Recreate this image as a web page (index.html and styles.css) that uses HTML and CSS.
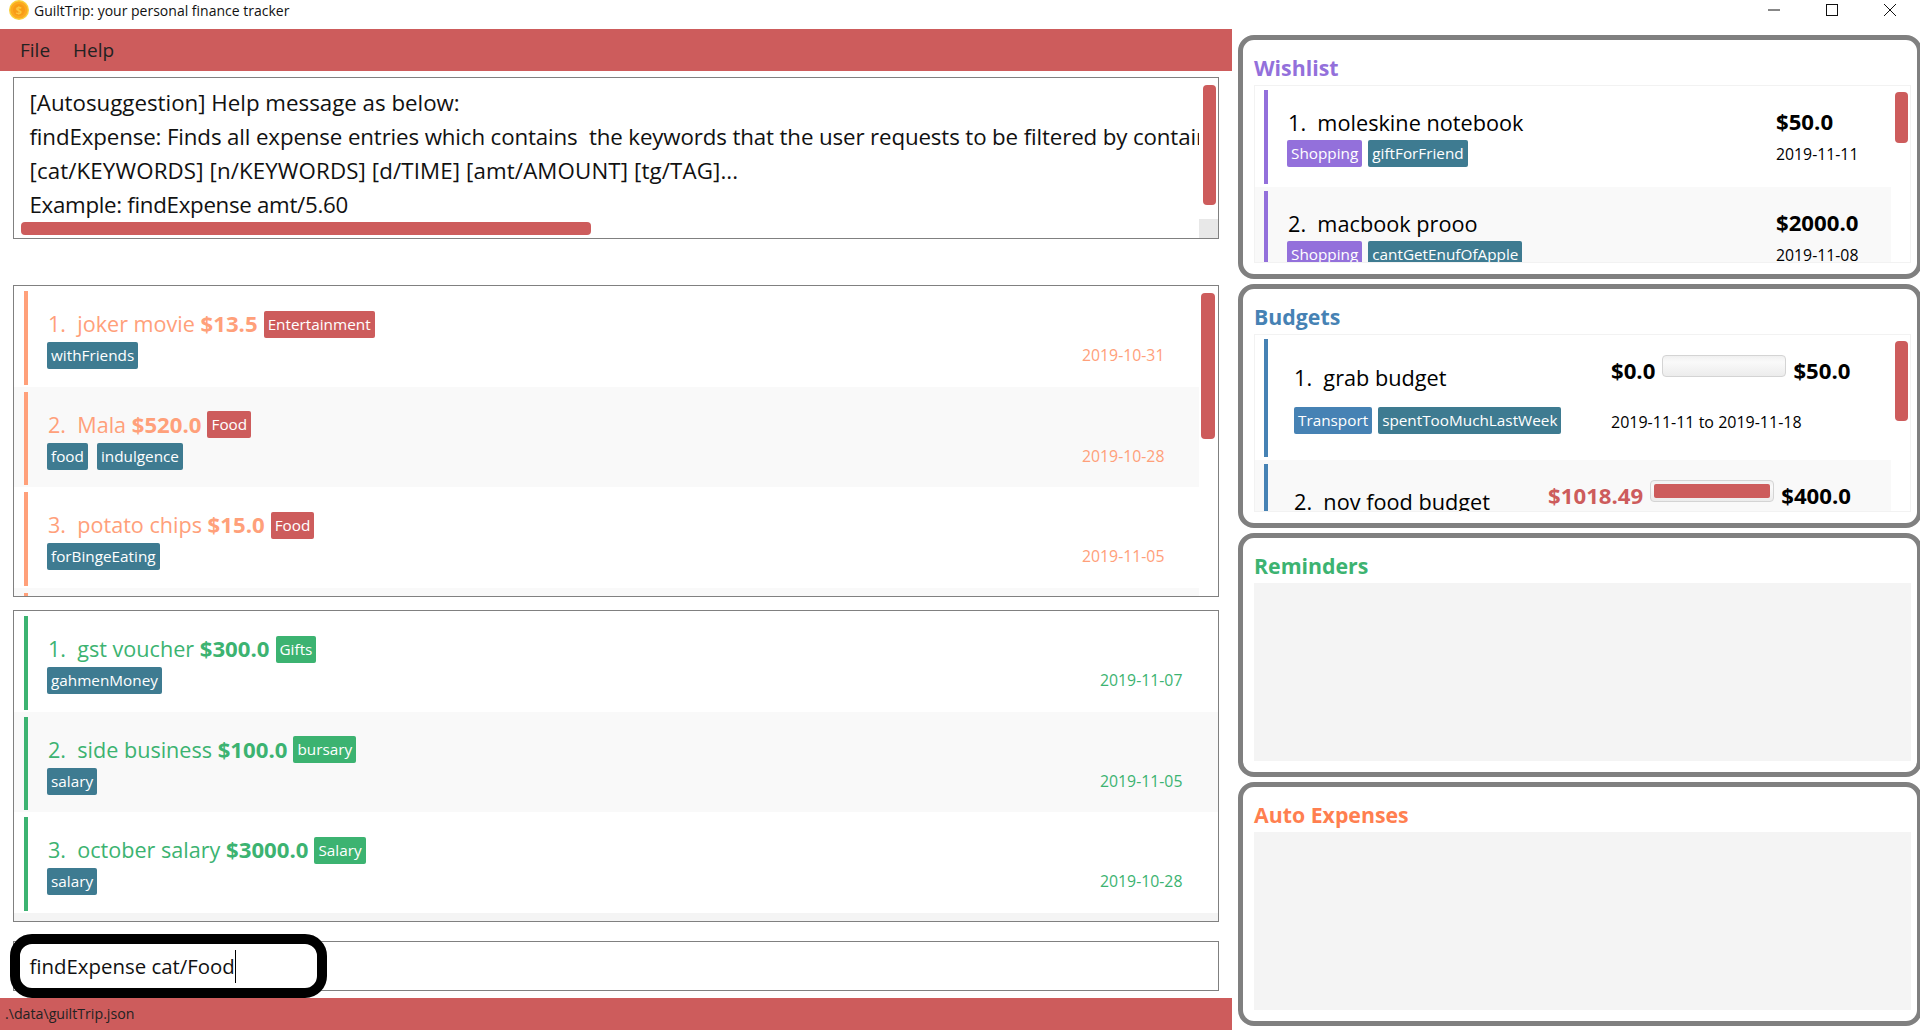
FILE: index.html
```html
<!DOCTYPE html>
<html lang="en">
<head>
  <meta charset="UTF-8" />
  <title>GuiltTrip: your personal finance tracker</title>
  <link rel="stylesheet" href="styles.css">
</head>
<body>

  <header class="titlebar">
    <svg class="coin" width="20" height="20" viewBox="0 0 20 20">
      <circle cx="10" cy="10" r="10" fill="#f9cf3a" />
      <circle cx="10" cy="10" r="8.6" fill="#fca81f" />
      <circle cx="10" cy="10" r="6" fill="#f89c16" />
      <text x="10" y="14" text-anchor="middle" class="coin-sign">$</text>
    </svg>
    <span class="app-title">GuiltTrip: your personal finance tracker</span>
    <div class="win-controls">
      <svg width="12" height="12" viewBox="0 0 12 12"><path d="M0 6H12" stroke="#111" fill="none" /></svg>
      <svg width="12" height="12" viewBox="0 0 12 12"><rect x=".5" y=".5" width="11" height="11" stroke="#111" fill="none" /></svg>
      <svg width="12" height="12" viewBox="0 0 12 12"><path d="M0 0L12 12M12 0L0 12" stroke="#111" fill="none" /></svg>
    </div>
  </header>

  <main class="app">
    <section class="left">
      <nav class="menubar">
        <span>File</span>
        <span>Help</span>
      </nav>

      <div class="box help-box">
        <div class="help-text">
          <p>[Autosuggestion] Help message as below:</p>
          <p>findExpense: Finds all expense entries which contains  the keywords that the user requests to be filtered by containing any of the following</p>
          <p>[cat/KEYWORDS] [n/KEYWORDS] [d/TIME] [amt/AMOUNT] [tg/TAG]...</p>
          <p>Example: findExpense amt/5.60</p>
        </div>
        <div class="thumb thumb-help-v"></div>
        <div class="thumb thumb-help-h"></div>
        <div class="corner"></div>
      </div>

      <div class="box list-box expenses">
        <div class="entry">
          <div class="entry-main">
            <div class="entry-title"><span>1.&nbsp; joker movie&nbsp;</span><b>$13.5</b><span class="tag cat-red">Entertainment</span></div>
            <div class="tags"><span class="tag">withFriends</span></div>
          </div>
          <div class="entry-date">2019-10-31</div>
        </div>
        <div class="entry">
          <div class="entry-main">
            <div class="entry-title"><span>2.&nbsp; Mala&nbsp;</span><b>$520.0</b><span class="tag cat-red">Food</span></div>
            <div class="tags"><span class="tag">food</span><span class="tag">indulgence</span></div>
          </div>
          <div class="entry-date">2019-10-28</div>
        </div>
        <div class="entry">
          <div class="entry-main">
            <div class="entry-title"><span>3.&nbsp; potato chips&nbsp;</span><b>$15.0</b><span class="tag cat-red">Food</span></div>
            <div class="tags"><span class="tag">forBingeEating</span></div>
          </div>
          <div class="entry-date">2019-11-05</div>
        </div>
        <div class="entry">
          <div class="entry-main"></div>
        </div>
        <div class="thumb thumb-expenses"></div>
      </div>

      <div class="box list-box incomes">
        <div class="entry">
          <div class="entry-main">
            <div class="entry-title"><span>1.&nbsp; gst voucher&nbsp;</span><b>$300.0</b><span class="tag cat-green">Gifts</span></div>
            <div class="tags"><span class="tag">gahmenMoney</span></div>
          </div>
          <div class="entry-date">2019-11-07</div>
        </div>
        <div class="entry">
          <div class="entry-main">
            <div class="entry-title"><span>2.&nbsp; side business&nbsp;</span><b>$100.0</b><span class="tag cat-green">bursary</span></div>
            <div class="tags"><span class="tag">salary</span></div>
          </div>
          <div class="entry-date">2019-11-05</div>
        </div>
        <div class="entry">
          <div class="entry-main">
            <div class="entry-title"><span>3.&nbsp; october salary&nbsp;</span><b>$3000.0</b><span class="tag cat-green">Salary</span></div>
            <div class="tags"><span class="tag">salary</span></div>
          </div>
          <div class="entry-date">2019-10-28</div>
        </div>
      </div>

      <div class="box command-box">
        <span class="command-text">findExpense cat/Food</span>
        <div class="highlight-ring"></div>
      </div>

      <footer class="statusbar">.\data\guiltTrip.json</footer>
    </section>

    <aside class="right">
      <section class="panel">
        <h3 class="panel-title wish">Wishlist</h3>
        <div class="panel-list">
          <div class="wish-row">
            <div class="wish-left">
              <div class="row-name">1.&nbsp; moleskine notebook</div>
              <div class="tags"><span class="tag cat-purple">Shopping</span><span class="tag">giftForFriend</span></div>
            </div>
            <div class="wish-right">
              <div class="row-price">$50.0</div>
              <div class="row-date">2019-11-11</div>
            </div>
          </div>
          <div class="wish-row">
            <div class="wish-left">
              <div class="row-name">2.&nbsp; macbook prooo</div>
              <div class="tags"><span class="tag cat-purple">Shopping</span><span class="tag">cantGetEnufOfApple</span></div>
            </div>
            <div class="wish-right">
              <div class="row-price">$2000.0</div>
              <div class="row-date">2019-11-08</div>
            </div>
          </div>
          <div class="thumb thumb-wish"></div>
        </div>
      </section>

      <section class="panel">
        <h3 class="panel-title budget">Budgets</h3>
        <div class="panel-list">
          <div class="budget-row">
            <div class="budget-left">
              <div class="row-name">1.&nbsp; grab budget</div>
              <div class="tags"><span class="tag cat-blue">Transport</span><span class="tag">spentTooMuchLastWeek</span></div>
            </div>
            <div class="budget-right">
              <div class="budget-line">
                <span class="row-price">$0.0</span>
                <span class="progress"></span>
                <span class="row-price">$50.0</span>
              </div>
              <div class="row-date">2019-11-11 to 2019-11-18</div>
            </div>
          </div>
          <div class="budget-row">
            <div class="budget-left">
              <div class="row-name">2.&nbsp; nov food budget</div>
            </div>
            <div class="budget-right">
              <div class="budget-line">
                <span class="row-price over">$1018.49</span>
                <span class="progress"><span class="progress-fill"></span></span>
                <span class="row-price">$400.0</span>
              </div>
            </div>
          </div>
          <div class="thumb thumb-budget"></div>
        </div>
      </section>

      <section class="panel">
        <h3 class="panel-title reminder">Reminders</h3>
        <div class="panel-list empty"></div>
      </section>

      <section class="panel">
        <h3 class="panel-title auto">Auto Expenses</h3>
        <div class="panel-list empty"></div>
      </section>
    </aside>
  </main>

</body>
</html>
```

FILE: styles.css
```css
* {
  margin: 0;
  padding: 0;
  box-sizing: border-box;
}
html, body {
  height: 100%;
  overflow: hidden;
}
body {
  width: 1920px;
  height: 1030px;
  background-color: #fff;
  color: #111;
  font-family: "Open Sans", "Noto Sans", sans-serif;
  display: flex;
  flex-direction: column;
}

/* title bar */
.titlebar {
  height: 29px;
  flex: none;
  display: flex;
  align-items: flex-start;
  padding-left: 9px;
}
.coin {
  flex: none;
}
.coin-sign {
  font-size: 11px;
  font-weight: bold;
  fill: #fdc63f;
}
.app-title {
  font-size: 14px;
  line-height: 22px;
  margin-left: 5px;
  color: #111;
}
.win-controls {
  margin-left: auto;
  display: flex;
  gap: 46px;
  padding: 4px 24px 0 0;
}

.app {
  flex: 1;
  display: flex;
  min-height: 0;
}
.left {
  width: 1232px;
  flex: none;
  display: flex;
  flex-direction: column;
}
.menubar {
  height: 42px;
  flex: none;
  background-color: #cd5c5c;
  display: flex;
  align-items: center;
  gap: 23px;
  padding-left: 20px;
  font-size: 19px;
  color: #222;
}

.box {
  position: relative;
  margin-left: 13px;
  width: 1206px;
  border: 1px solid #808080;
  background-color: #fff;
  overflow: hidden;
  flex: none;
}
.help-box {
  margin-top: 6px;
  height: 162px;
}
.help-text {
  width: 1185px;
  overflow: hidden;
  padding: 8px 0 0 15.5px;
  font-size: 22.3px;
  line-height: 34px;
}
.help-text p {
  white-space: pre;
}
.help-text p:nth-child(2) {
  letter-spacing: -0.13px;
}
.help-text p:nth-child(3) {
  letter-spacing: 0.12px;
}
.help-text p:nth-child(4) {
  letter-spacing: -0.3px;
}
.thumb {
  position: absolute;
  background-color: #cd5c5c;
  border-radius: 4px;
}
.thumb-help-v {
  left: 1189px;
  top: 7px;
  width: 13px;
  height: 120px;
}
.thumb-help-h {
  left: 7px;
  top: 144px;
  width: 570px;
  height: 13px;
}
.corner {
  position: absolute;
  right: 0;
  bottom: 0;
  width: 19px;
  height: 19px;
  background-color: #e8e8e8;
}

/* expense and income lists */
.list-box {
  height: 312px;
  background-color: #f4f4f4;
}
.expenses {
  margin-top: 46px;
  background-color: #fff;
}
.expenses .entry {
  width: 1185px;
  color: #ffa07a;
}
.incomes {
  margin-top: 13px;
}
.incomes .entry {
  color: #3cb371;
}
.entry {
  height: 100.5px;
  display: flex;
  padding: 5px 0 2px 10px;
  background-color: #fff;
}
.entry:nth-child(even) {
  background-color: #f9f9f9;
}
.entry-main {
  flex: 1;
  border-left: 4px solid;
  padding: 18px 0 0 20px;
}
.entry-title {
  font-size: 21.6px;
  line-height: 30px;
  display: flex;
  align-items: center;
  white-space: nowrap;
}
.entry-title b {
  font-size: 22.2px;
}
.entry-title .tag {
  margin-left: 6px;
}
.tags {
  display: flex;
  gap: 6px;
  margin-top: 3px;
}
.entry-main .tags {
  margin-left: -1px;
}
.expenses .tags {
  gap: 9px;
}
.tag {
  display: inline-block;
  height: 27px;
  padding: 0 4px;
  background-color: #3e7b91;
  color: #fff;
  font-size: 15.3px;
  font-weight: normal;
  line-height: 26px;
  border-radius: 2px;
  white-space: nowrap;
}
.cat-red {
  background-color: #cd5c5c;
}
.cat-green {
  background-color: #3cb371;
}
.cat-purple {
  background-color: #9370db;
}
.cat-blue {
  background-color: #4682b4;
}
.entry-date {
  flex: none;
  align-self: flex-start;
  font-size: 15.8px;
  line-height: 22px;
  margin-top: 53px;
}
.expenses .entry-date {
  width: 117px;
}
.incomes .entry-date {
  width: 118px;
}
.thumb-expenses {
  left: 1187px;
  top: 7px;
  width: 14px;
  height: 146px;
}

/* command box */
.command-box {
  margin-top: 19px;
  height: 50px;
  overflow: visible;
  display: flex;
  align-items: center;
  padding-left: 15.5px;
  font-size: 20.4px;
}
.command-text {
  border-right: 1px solid #000;
  line-height: 33px;
}
.highlight-ring {
  position: absolute;
  left: -4px;
  top: -8px;
  width: 317px;
  height: 64px;
  border: 10px solid #000;
  border-radius: 22px;
}

.statusbar {
  margin-top: 7px;
  height: 32px;
  flex: none;
  background-color: #cd5c5c;
  font-size: 14.2px;
  line-height: 32px;
  padding-left: 5px;
  color: #222;
}

/* right side */
.right {
  width: 684px;
  flex: none;
  margin: 6px 0 0 6px;
  display: flex;
  flex-direction: column;
  gap: 5px;
}
.panel {
  height: 244px;
  flex: none;
  border: 5px solid #808080;
  border-radius: 16px;
  padding: 10px 0 0 11px;
  background-color: #fff;
}
.panel-title {
  font-size: 21.3px;
  line-height: 35px;
  font-weight: bold;
}
.wish {
  color: #9370db;
}
.budget {
  color: #4682b4;
}
.reminder {
  color: #3cb371;
}
.auto {
  color: #ff7f50;
}
.panel-list {
  position: relative;
  width: 657px;
  height: 178px;
  overflow: hidden;
  border: 1px solid #f2f2f2;
  color: #000;
}
.panel-list.empty {
  background-color: #f4f4f4;
  border: none;
}
.wish-row,
.budget-row {
  width: 636px;
  display: flex;
  padding: 4px 0 0 9px;
  background-color: #fff;
}
.wish-row {
  height: 101px;
}
.budget-row {
  height: 125px;
}
.wish-row:nth-child(even),
.budget-row:nth-child(even) {
  background-color: #f9f9f9;
}
.wish-left,
.budget-left {
  flex: 1;
  height: 94px;
  border-left: 4px solid #9370db;
  padding: 17px 0 0 20px;
}
.wish-left .tags {
  margin: 1px 0 0 -1px;
}
.budget-left {
  height: 118px;
  border-left-color: #4682b4;
  padding: 23px 0 0 26px;
}
.budget-row:nth-child(even) .budget-left {
  height: 100px;
  padding-top: 22px;
}
.row-name {
  font-size: 21.7px;
  line-height: 32px;
  white-space: nowrap;
}
.budget-left .tags {
  margin-top: 13px;
}
.wish-right {
  width: 115px;
  flex: none;
  padding-top: 16px;
}
.row-price {
  font-size: 22.2px;
  line-height: 32px;
  font-weight: bold;
  white-space: nowrap;
}
.row-price.over {
  color: #cd5c5c;
}
.row-date {
  font-size: 15.8px;
  line-height: 22px;
  margin-top: 5px;
}
.budget-right {
  width: 280px;
  flex: none;
  padding-top: 16px;
}
.budget-row:nth-child(even) .budget-right {
  width: 344px;
}
.budget-line {
  display: flex;
  align-items: flex-start;
  gap: 7px;
}
.budget-row:nth-child(even) .budget-line {
  justify-content: flex-end;
  padding-right: 40px;
}
.progress {
  width: 124px;
  height: 22px;
  flex: none;
  display: block;
  border: 1px solid #d4d4d4;
  border-radius: 4px;
  background: linear-gradient(#f0f0f0, #fafafa 30%, #ececec);
  padding: 3px;
}
.progress-fill {
  display: block;
  height: 100%;
  border-radius: 2px;
  background-color: #cd5c5c;
}
.budget-right .row-date {
  font-size: 16px;
  margin-top: 24px;
}
.thumb-wish,
.thumb-budget {
  left: 640px;
  top: 6px;
  width: 13px;
}
.thumb-wish {
  height: 51px;
}
.thumb-budget {
  height: 80px;
}
```
